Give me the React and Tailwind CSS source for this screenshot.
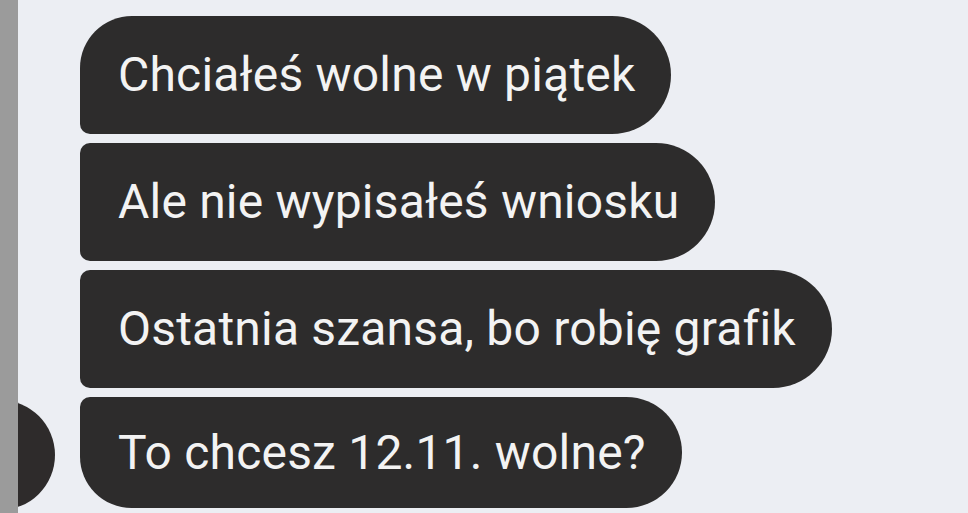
export default function App() {
  const messages = [
    { text: 'Chciałeś wolne w piątek', shape: 'h-[118px] rounded-tl-[52px] rounded-bl-[10px] rounded-r-[59px]' },
    { text: 'Ale nie wypisałeś wniosku', shape: 'h-[118px] rounded-l-[10px] rounded-r-[59px]' },
    { text: 'Ostatnia szansa, bo robię grafik', shape: 'h-[118px] rounded-l-[10px] rounded-r-[59px]' },
    { text: 'To chcesz 12.11. wolne?', shape: 'h-[111px] rounded-tl-[10px] rounded-bl-[52px] rounded-r-[56px]', last: true },
  ];

  return (
    <div className="flex h-[513px] w-[968px] overflow-hidden bg-[#eceef3] font-['Roboto',sans-serif]">
      {/* left edge of the screenshot */}
      <div className="relative z-10 w-[18px] shrink-0 bg-[#9b9b9b]" />

      <div className="flex flex-col gap-[9px] pt-[16px]">
        {messages.map((m) => (
          <div key={m.text} className="flex items-start">
            {m.last ? (
              <div className="ml-[-73px] mr-[25px] mt-[3px] h-[110px] w-[110px] shrink-0 rounded-full bg-[#2e2b2b]" />
            ) : (
              <div className="w-[62px] shrink-0" />
            )}
            <div
              className={`flex items-center bg-[#2d2c2c] pl-[38px] pr-[36px] text-[48px] leading-none tracking-[0.2px] text-[#f3f3f3] ${m.shape}`}
            >
              {m.text}
            </div>
          </div>
        ))}
      </div>
    </div>
  );
}
